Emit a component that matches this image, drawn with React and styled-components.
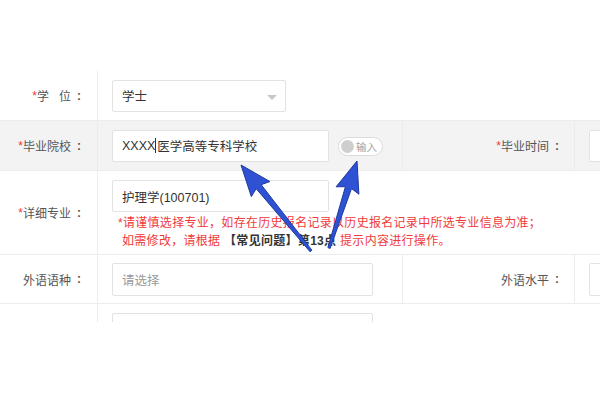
import React from "react";
import styled, { createGlobalStyle } from "styled-components";

const GlobalStyle = createGlobalStyle`
  html, body {
    margin: 0;
    padding: 0;
    background: #fff;
    width: 600px;
    height: 400px;
    overflow: hidden;
    font-family: "Liberation Sans", "Noto Sans CJK SC", sans-serif;
  }
`;

const Page = styled.div`
  position: relative;
  width: 600px;
  height: 400px;
  padding-top: 71px;
  box-sizing: border-box;
  overflow: hidden;
`;

const Form = styled.div`
  width: 600px;
`;

const Row = styled.div`
  display: grid;
  grid-template-columns: 98px 304px 173px 1fr;
  box-sizing: border-box;
  height: ${(p) => p.h}px;
  background: ${(p) => (p.gray ? "#f3f3f3" : "#fff")};
  border-bottom: ${(p) => (p.last ? "none" : "1px solid #ececec")};
  overflow: hidden;
`;

const Label = styled.div`
  display: flex;
  align-items: center;
  justify-content: flex-end;
  padding-right: ${(p) => p.pr || 16}px;
  font-size: 12px;
  color: #555;
  border-right: 1px solid #ececec;
  border-left: ${(p) => (p.side ? "1px solid #ececec" : "none")};
  white-space: nowrap;
`;

const Star = styled.span`
  color: #f03a3a;
`;

const Colon = styled.span`
  margin-left: 6px;
  font-weight: bold;
`;

const Gap = styled.span`
  display: inline-block;
  width: ${(p) => p.w}px;
`;

const Value = styled.div`
  display: flex;
  flex-direction: ${(p) => (p.column ? "column" : "row")};
  align-items: ${(p) => (p.column ? "flex-start" : "center")};
  justify-content: flex-start;
  padding: ${(p) => (p.top ? "9px 0 0 14px" : "0 0 0 14px")};
  grid-column: ${(p) => (p.span ? "2 / 5" : "auto")};
  gap: ${(p) => (p.column ? 2 : 9)}px;
`;

const Input = styled.div`
  position: relative;
  display: flex;
  align-items: center;
  width: ${(p) => p.w}px;
  height: ${(p) => p.hh || 32}px;
  box-sizing: border-box;
  background: #fff;
  border: 1px solid #e2e2e2;
  border-radius: 2px;
  padding-left: 9px;
  font-size: 12.5px;
  color: ${(p) => (p.placeholder ? "#9a9a9a" : "#333")};
  flex-shrink: 0;
`;

const Caret = styled.span`
  display: inline-block;
  width: 1px;
  height: 15px;
  background: #333;
  margin: 0 1px 0 0;
`;

const DropArrow = styled.span`
  position: absolute;
  right: 8px;
  top: 14px;
  width: 0;
  height: 0;
  border-left: 5px solid transparent;
  border-right: 5px solid transparent;
  border-top: 5px solid #c8c8c8;
`;

const Toggle = styled.div`
  display: flex;
  align-items: center;
  gap: 2px;
  width: 45px;
  height: 19px;
  box-sizing: border-box;
  border: 1px solid #dcdcdc;
  border-radius: 10px;
  background: #fff;
  padding-left: 2px;
  font-size: 10.5px;
  color: #a0a0a0;
  margin-top: 2px;
`;

const Knob = styled.span`
  width: 13px;
  height: 13px;
  border-radius: 50%;
  background: #cfcfcf;
`;

const SideValue = styled.div`
  display: flex;
  align-items: center;
  padding-left: 14px;
`;

const Note = styled.div`
  font-size: 12px;
  line-height: 18px;
  color: #f03a3a;
  white-space: nowrap;
  padding-left: 6px;
  letter-spacing: 0.3px;
`;

const NoteLine = styled.div`
  padding-left: ${(p) => p.indent || 0}px;
`;

const Strong = styled.b`
  color: #333;
  font-weight: bold;
`;

const Overlay = styled.svg`
  position: absolute;
  left: 0;
  top: 0;
  pointer-events: none;
`;

function Arrow({ x1, y1, x2, y2 }) {
  const dx = x2 - x1;
  const dy = y2 - y1;
  const len = Math.hypot(dx, dy);
  const ux = dx / len;
  const uy = dy / len;
  const nx = -uy;
  const ny = ux;
  const headLen = 28;
  const headW = 12;
  const bx = x2 - ux * headLen;
  const by = y2 - uy * headLen;
  const nb = 3.2;
  const pts = [
    [x1 + nx * 1.2, y1 + ny * 1.2],
    [bx + nx * nb, by + ny * nb],
    [bx + nx * headW - ux * 3, by + ny * headW - uy * 3],
    [x2, y2],
    [bx - nx * headW - ux * 3, by - ny * headW - uy * 3],
    [bx - nx * nb, by - ny * nb],
    [x1 - nx * 1.2, y1 - ny * 1.2],
  ]
    .map((p) => p.map((v) => v.toFixed(1)).join(","))
    .join(" ");
  return (
    <polygon
      points={pts}
      fill="#2f52d4"
      stroke="#1f3a9e"
      strokeWidth="1"
      strokeLinejoin="round"
    />
  );
}

export default function App() {
  return (
    <>
      <GlobalStyle />
      <Page>
        <Form>
          <Row h={50}>
            <Label>
              <Star>*</Star>学<Gap w={10} />位<Colon>:</Colon>
            </Label>
            <Value span>
              <Input w={174}>
                学士
                <DropArrow />
              </Input>
            </Value>
          </Row>

          <Row h={50} gray>
            <Label>
              <Star>*</Star>毕业院校<Colon>:</Colon>
            </Label>
            <Value>
              <Input w={217}>
                XXXX
                <Caret />
                医学高等专科学校
              </Input>
              <Toggle>
                <Knob />
                输入
              </Toggle>
            </Value>
            <Label side pr={15}>
              <Star>*</Star>毕业时间<Colon>:</Colon>
            </Label>
            <SideValue>
              <Input w={40} />
            </SideValue>
          </Row>

          <Row h={84}>
            <Label>
              <Star>*</Star>详细专业<Colon>:</Colon>
            </Label>
            <Value span column top>
              <Input w={217}>护理学(100701)</Input>
              <Note>
                <NoteLine>
                  *请谨慎选择专业，如存在历史报名记录以历史报名记录中所选专业信息为准；
                </NoteLine>
                <NoteLine indent={4}>
                  如需修改，请根据 <Strong>【常见问题】第13点</Strong> 提示内容进行操作。
                </NoteLine>
              </Note>
            </Value>
          </Row>

          <Row h={49}>
            <Label>
              外语语种<Colon>:</Colon>
            </Label>
            <Value>
              <Input w={261} hh={33} placeholder="1">
                请选择
              </Input>
            </Value>
            <Label side pr={15}>
              外语水平<Colon>:</Colon>
            </Label>
            <SideValue>
              <Input w={40} hh={33} />
            </SideValue>
          </Row>

          <Row h={18} last>
            <Label />
            <Value span top>
              <Input w={261} hh={33} />
            </Value>
          </Row>
        </Form>

        <Overlay width="600" height="400" viewBox="0 0 600 400">
          <Arrow x1={311} y1={251} x2={241} y2={165} />
          <Arrow x1={329} y1={248} x2={357} y2={161} />
        </Overlay>
      </Page>
    </>
  );
}
